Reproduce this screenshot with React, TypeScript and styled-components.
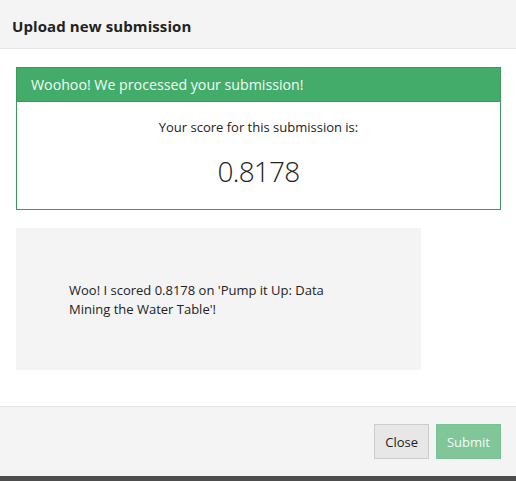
import React from "react";
import styled, { createGlobalStyle } from "styled-components";

const Global = createGlobalStyle`
  html, body { margin: 0; padding: 0; background: #ffffff; }
  body { font-family: "Open Sans", "Liberation Sans", sans-serif; color: #222222; }
`;

const Modal = styled.div`
  width: 516px;
  height: 481px;
  display: flex;
  flex-direction: column;
  background: #ffffff;
  overflow: hidden;
`;

const Header = styled.header`
  height: 49px;
  flex: none;
  display: flex;
  align-items: center;
  padding: 3px 12px 0;
  box-sizing: border-box;
  background: #f4f4f4;
  border-bottom: 1px solid #e5e5e5;
`;

const Title = styled.h2`
  margin: 0;
  font-size: 15px;
  font-weight: 700;
  color: #222222;
  letter-spacing: 0.1px;
`;

const Body = styled.div`
  flex: 1;
  padding: 18px 15px 0 16px;
  display: flex;
  flex-direction: column;
  gap: 18px;
`;

const Alert = styled.section`
  border: 1px solid #3c9a5f;
  display: flex;
  flex-direction: column;
`;

const AlertHead = styled.div`
  height: 33px;
  display: flex;
  align-items: center;
  padding: 0 14px;
  background: #43ac6a;
  border-bottom: 1px solid #3c9a5f;
  color: #f2fbf5;
  font-size: 14.2px;
`;

const AlertBody = styled.div`
  height: 107px;
  display: flex;
  flex-direction: column;
  align-items: center;
  padding-top: 16px;
  box-sizing: border-box;
`;

const ScoreLabel = styled.div`
  font-size: 13px;
  line-height: 18px;
  color: #222222;
`;

const Score = styled.div`
  margin-top: 17px;
  font-size: 28px;
  font-weight: 300;
  letter-spacing: -0.8px;
  line-height: 36px;
  color: #222222;
`;

const Share = styled.div`
  width: 405px;
  height: 142px;
  background: #f4f4f4;
  display: flex;
  align-items: center;
  padding: 2px 0 0 53px;
  box-sizing: border-box;
`;

const ShareText = styled.p`
  margin: 0;
  width: 290px;
  font-size: 13px;
  line-height: 19px;
  color: #222222;
`;

const Footer = styled.footer`
  height: 69px;
  flex: none;
  display: flex;
  justify-content: flex-end;
  align-items: center;
  gap: 7px;
  padding: 0 15px 0 0;
  background: #f4f4f4;
  border-top: 1px solid #e3e3e3;
`;

const Button = styled.button<{ $primary?: boolean }>`
  height: 35px;
  padding: 0 10px;
  font-family: "Open Sans", "Liberation Sans", sans-serif;
  font-size: 13px;
  border: 1px solid ${(p) => (p.$primary ? "#79c294" : "#cccccc")};
  background: ${(p) => (p.$primary ? "#80c699" : "#e7e7e7")};
  color: ${(p) => (p.$primary ? "#f3fbf6" : "#222222")};
  cursor: pointer;
`;

const Shade = styled.div`
  height: 5px;
  flex: none;
  background: #4d4d4d;
`;

export default function App() {
  return (
    <>
      <Global />
      <Modal>
        <Header>
          <Title>Upload new submission</Title>
        </Header>
        <Body>
          <Alert>
            <AlertHead>Woohoo! We processed your submission!</AlertHead>
            <AlertBody>
              <ScoreLabel>Your score for this submission is:</ScoreLabel>
              <Score>0.8178</Score>
            </AlertBody>
          </Alert>
          <Share>
            <ShareText>
              Woo! I scored 0.8178 on 'Pump it Up: Data Mining the Water Table'!
            </ShareText>
          </Share>
        </Body>
        <Footer>
          <Button>Close</Button>
          <Button $primary disabled>
            Submit
          </Button>
        </Footer>
        <Shade />
      </Modal>
    </>
  );
}
